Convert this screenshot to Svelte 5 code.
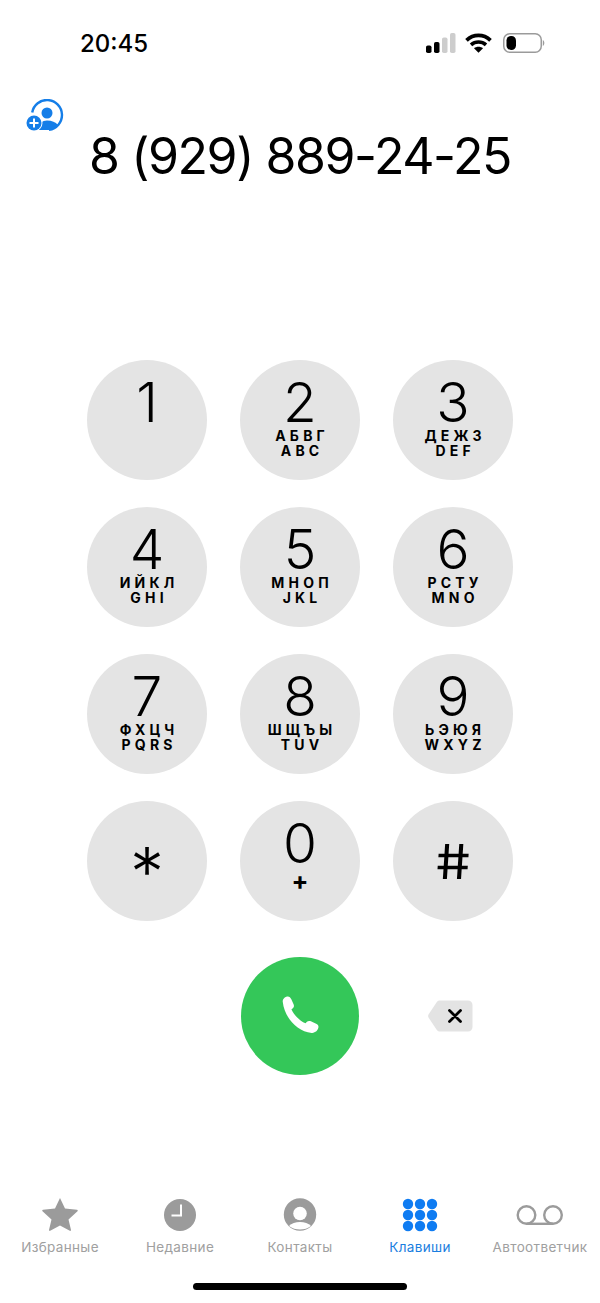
<script>
  const keys = [
    { digit: '1', lines: [] },
    { digit: '2', lines: ['АБВГ', 'ABC'] },
    { digit: '3', lines: ['ДЕЖЗ', 'DEF'] },
    { digit: '4', lines: ['ИЙКЛ', 'GHI'] },
    { digit: '5', lines: ['МНОП', 'JKL'] },
    { digit: '6', lines: ['РСТУ', 'MNO'] },
    { digit: '7', lines: ['ФХЦЧ', 'PQRS'] },
    { digit: '8', lines: ['ШЩЪЫ', 'TUV'] },
    { digit: '9', lines: ['ЬЭЮЯ', 'WXYZ'] },
    { digit: '*', lines: [], kind: 'star' },
    { digit: '0', lines: ['+'], kind: 'zero' },
    { digit: '#', lines: [], kind: 'hash' }
  ]

  const tabs = [
    { id: 'fav', label: 'Избранные' },
    { id: 'recent', label: 'Недавние' },
    { id: 'contacts', label: 'Контакты' },
    { id: 'keypad', label: 'Клавиши', active: true },
    { id: 'voicemail', label: 'Автоответчик' }
  ]

  const dots = [9, 20, 31]
</script>

<div class="screen">
  <header class="status">
    <span class="time">20:45</span>
    <div class="status-icons">
      <svg class="signal" width="30" height="20" viewBox="0 0 30 20">
        <rect x="0" y="12.500" width="5.500" height="7.500" rx="1.800" fill="#000" />
        <rect x="8" y="9" width="5.500" height="11" rx="1.800" fill="#000" />
        <rect x="16" y="4.500" width="5.500" height="15.500" rx="1.800" fill="#cdcdcd" />
        <rect x="24" y="0" width="5.500" height="20" rx="1.800" fill="#cdcdcd" />
      </svg>
      <svg width="27" height="20" viewBox="0 0 27 20">
        <path d="M1.500 7.300C8.500 0.800 18.500 0.800 25.500 7.300" fill="none" stroke="#000" stroke-width="3.800" />
        <path d="M6 11.800C10.300 8 16.700 8 21 11.800" fill="none" stroke="#000" stroke-width="3.600" />
        <path d="M13.500 19.800L9 15.300C11.500 13.300 15.500 13.300 18 15.300Z" fill="#000" />
      </svg>
      <svg width="42" height="20" viewBox="0 0 42 20">
        <rect x="0.750" y="0.750" width="37.500" height="18.500" rx="6" fill="none" stroke="#9b9b9b" stroke-width="1.500" />
        <rect x="3.500" y="3" width="9.500" height="14" rx="4.500" fill="#000" />
        <path d="M39.800 7C41.800 7.800 41.800 12.200 39.800 13Z" fill="#9b9b9b" />
      </svg>
    </div>
  </header>

  <section class="number-area">
    <svg class="add-contact" width="40" height="34" viewBox="0 0 40 34">
      <path d="M7.200 13.500A15 15 0 1 1 24 30.900" fill="none" stroke="#157ee8" stroke-width="2.400" />
      <circle cx="22" cy="14" r="5.500" fill="#157ee8" />
      <path d="M13.500 31C13.500 24.500 17.500 21.500 22 21.500C27 21.500 30.500 23 33 26C30 29.500 27 31 22 31Z" fill="#157ee8" />
      <circle cx="9" cy="24" r="8.500" fill="#fff" />
      <circle cx="9" cy="24" r="7.500" fill="#157ee8" />
      <path d="M9 19.500V28.500M4.500 24H13.500" stroke="#fff" stroke-width="2" />
    </svg>
    <div class="number">8 (929) 889-24-25</div>
  </section>

  <section class="keypad">
    {#each keys as key}
      <div class="key {key.kind ?? ''}">
        <span class="digit">{key.digit}</span>
        {#each key.lines as line}
          <span class="letters">{line}</span>
        {/each}
      </div>
    {/each}
  </section>

  <section class="actions">
    <div class="side"></div>
    <div class="call">
      <svg width="40" height="40" viewBox="0 0 36 36">
        <path d="M2.500 5.500C2 3 4.500 0.500 7 0.500C8.500 0.500 9.500 1.500 10.200 3L12.200 7.500C12.900 9 12.500 10.200 11.300 11.200L10.300 12C11.800 16.500 18.300 23 23 24.500L24 23.500C25 22.500 26.300 22.100 27.800 22.800L32.500 25C34 25.700 34.800 26.700 34.600 28.200C34.300 31 31.500 33.500 28.500 33.200C15 32 4 19 2.500 5.500Z" fill="#fff" />
      </svg>
    </div>
    <div class="side backspace">
      <svg width="46" height="34" viewBox="0 0 46 34">
        <path d="M13 1.500H41A4.500 4.500 0 0 1 45.500 6V28A4.500 4.500 0 0 1 41 32.500H13C11.800 32.500 10.800 32 10 31.200L1.500 18.500C1 17.700 1 16.300 1.500 15.500L10 2.800C10.800 2 11.800 1.500 13 1.500Z" fill="#e3e3e3" />
        <path d="M22.500 11.500L33.500 22.500M33.500 11.500L22.500 22.500" stroke="#000" stroke-width="2.800" stroke-linecap="round" />
      </svg>
    </div>
  </section>

  <nav class="tabs">
    {#each tabs as tab}
      <div class="tab" class:active={tab.active}>
        <svg class="tab-icon" width="48" height="38" viewBox="0 0 48 38">
          {#if tab.id === 'fav'}
            <path d="M24 3L29 13.500L41 14.800C41.800 15 42 15.800 41.500 16.300L32.500 24.500L35 35C35.100 35.700 34.400 36.200 33.800 35.800L24 30.500L14.200 35.800C13.600 36.200 12.900 35.700 13 35L15.500 24.500L6.500 16.300C6 15.800 6.200 15 7 14.800L19 13.500Z" fill="#9b9b9b" />
          {:else if tab.id === 'recent'}
            <circle cx="24" cy="20" r="16" fill="#9b9b9b" />
            <path d="M25 9.500V20.500H15.500" fill="none" stroke="#fff" stroke-width="2" />
          {:else if tab.id === 'contacts'}
            <circle cx="24" cy="19.500" r="16.200" fill="#9b9b9b" />
            <circle cx="24" cy="18.500" r="6.800" fill="#fff" />
            <path d="M13 31C15.500 28.200 19.500 27 24 27C28.500 27 32.500 28.200 35 31C32 33.500 28 34.500 24 34.500C20 34.500 16 33.500 13 31Z" fill="#fff" />
          {:else if tab.id === 'keypad'}
            {#each dots as y}
              {#each [12, 24, 36] as x}
                <circle cx={x} cy={y} r="5.200" fill="#0f7cf2" />
              {/each}
            {/each}
          {:else}
            <circle cx="10.500" cy="20" r="8.800" fill="none" stroke="#9b9b9b" stroke-width="2.400" />
            <circle cx="37" cy="20" r="8.800" fill="none" stroke="#9b9b9b" stroke-width="2.400" />
            <path d="M10.500 28.800H37" stroke="#9b9b9b" stroke-width="2.400" />
          {/if}
        </svg>
        <span class="tab-label">{tab.label}</span>
      </div>
    {/each}
  </nav>

  <div class="home-indicator"></div>
</div>

<style>
  :global(body) {
    background: #fff;
    font-family: Inter, "Liberation Sans", sans-serif;
  }

  .screen {
    width: 600px;
    height: 1303px;
    overflow: hidden;
    display: flex;
    flex-direction: column;
    color: #000;
    background: #fff;
  }

  .status {
    height: 88px;
    box-sizing: border-box;
    padding: 30px 55px 0 80px;
    display: flex;
    justify-content: space-between;
    align-items: flex-start;
  }

  .time {
    font-size: 24px;
    line-height: 28px;
    font-weight: 500;
  }

  .status-icons {
    display: flex;
    gap: 11px;
    align-items: center;
    margin-top: 3px;
  }

  .signal {
    margin-right: -2px;
  }

  .number-area {
    position: relative;
    height: 272px;
    box-sizing: border-box;
    padding-top: 36px;
  }

  .add-contact {
    position: absolute;
    left: 25px;
    top: 11px;
  }

  .number {
    text-align: center;
    font-size: 50px;
    line-height: 64px;
    font-weight: 400;
    letter-spacing: -1.450px;
  }

  .keypad {
    display: grid;
    grid-template-columns: repeat(3, 120px);
    grid-auto-rows: 120px;
    gap: 27px 33px;
    justify-content: center;
  }

  .key {
    border-radius: 50%;
    background: #e4e4e4;
    display: flex;
    flex-direction: column;
    align-items: center;
    padding-top: 20px;
    box-sizing: border-box;
  }

  .digit {
    font-size: 55px;
    line-height: 44px;
    font-weight: 300;
    margin-bottom: 4px;
  }

  .letters {
    font-size: 14px;
    line-height: 15px;
    font-weight: 700;
    letter-spacing: 4.200px;
    margin-right: -4.200px;
  }

  .key.star .digit {
    font-size: 68px;
    line-height: 62px;
    margin-top: 20px;
  }

  .key.hash .digit {
    font-size: 48px;
    font-weight: 400;
    line-height: 44px;
    margin-top: 19px;
    transform: skewX(7deg) scaleX(1.150);
  }

  .key.zero .letters {
    font-size: 25px;
    line-height: 20px;
    letter-spacing: 0;
    margin: 2px 0 0;
  }

  .actions {
    margin-top: 36px;
    display: grid;
    grid-template-columns: repeat(3, 120px);
    gap: 33px;
    justify-content: center;
    height: 118px;
  }

  .call {
    width: 118px;
    height: 118px;
    justify-self: center;
    border-radius: 50%;
    background: #34c759;
    display: flex;
    align-items: center;
    justify-content: center;
  }

  .side {
    display: flex;
    align-items: center;
    justify-content: center;
  }

  .backspace {
    padding-right: 7px;
  }

  .tabs {
    margin-top: 120px;
    display: grid;
    grid-template-columns: repeat(5, 120px);
  }

  .tab {
    display: flex;
    flex-direction: column;
    align-items: center;
    color: #a0a0a0;
  }

  .tab.active {
    color: #1a7ee0;
  }

  .tab-icon {
    display: block;
    overflow: visible;
  }

  .tab-label {
    margin-top: 6px;
    font-size: 13.500px;
    line-height: 17px;
    letter-spacing: 0.350px;
    white-space: nowrap;
  }

  .home-indicator {
    width: 214px;
    height: 7px;
    margin: 27px auto 0;
    border-radius: 4px;
    background: #000;
  }
</style>
